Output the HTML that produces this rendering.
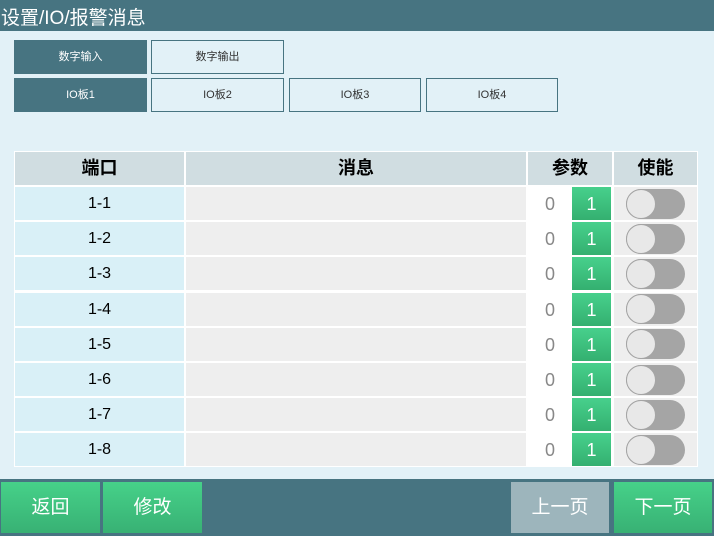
<!DOCTYPE html>
<html><head><meta charset="utf-8"><style>
*{margin:0;padding:0;box-sizing:border-box}
body{width:714px;height:536px;overflow:hidden;background:#e2f1f7;font-family:"Liberation Sans","Noto Sans CJK SC",sans-serif;position:relative}
.hd{position:absolute;left:0;top:0;width:714px;height:31px;background:#477481;color:#fff;font-size:19px;line-height:38px;padding-left:1px;overflow:hidden}
.t{position:absolute;height:34px;font-size:11px;line-height:32px;text-align:center;border:1px solid #477481;color:#333;background:#e2f1f7}
.t.on{background:#477481;color:#fff}
.tb{position:absolute;left:14px;top:151px;width:684px;height:316px;background:#fff}
.c{position:absolute;text-align:center}
.h{background:#d0dde1;font-weight:bold;font-size:18px;line-height:33px;color:#000}
.p{background:#d9f0f7;font-size:16px;line-height:34px;color:#000}
.m{background:#eeeeee}
.z{background:#fff;color:#888;font-size:18px;line-height:34px}
.g{background:linear-gradient(#47d08c,#34b070);color:#fff;font-size:18px;line-height:34px}
.tg{position:absolute;width:59px;height:30px;border-radius:15px;background:#a5a5a5}
.tg:after{content:"";position:absolute;left:0;top:0;width:30px;height:30px;border-radius:50%;background:#e8e8e8;border:1px solid #a5a5a5;box-sizing:border-box}
.ft{position:absolute;left:0;top:479px;width:714px;height:57px;background:#477481}
.b{position:absolute;top:482px;height:51px;font-size:19px;line-height:51px;color:#fff;text-align:center;background:linear-gradient(#46d189,#38b174)}
</style></head><body>
<div class="hd">设置/IO/报警消息</div>
<div class="t on" style="left:14px;top:40px;width:133px">数字输入</div>
<div class="t" style="left:151px;top:40px;width:133px">数字输出</div>
<div class="t on" style="left:14px;top:78px;width:133px">IO板1</div>
<div class="t" style="left:151px;top:78px;width:133px">IO板2</div>
<div class="t" style="left:289px;top:78px;width:132px">IO板3</div>
<div class="t" style="left:426px;top:78px;width:132px">IO板4</div>
<div class="tb"></div>
<div class="c h" style="left:15px;top:152px;width:169px;height:33px">端口</div>
<div class="c h" style="left:186px;top:152px;width:340px;height:33px">消息</div>
<div class="c h" style="left:528px;top:152px;width:84px;height:33px">参数</div>
<div class="c h" style="left:614px;top:152px;width:83px;height:33px">使能</div>
<div id="rows"></div>
<script>
var s='';for(var i=0;i<8;i++){var y=187+i*35.2;
s+='<div class="c p" style="left:15px;top:'+y+'px;width:169px;height:33px">1-'+(i+1)+'</div>'+
'<div class="c m" style="left:186px;top:'+y+'px;width:340px;height:33px"></div>'+
'<div class="c z" style="left:528px;top:'+y+'px;width:44px;height:33px">0</div>'+
'<div class="c g" style="left:572px;top:'+y+'px;width:39px;height:33px">1</div>'+
'<div class="c m" style="left:614px;top:'+y+'px;width:83px;height:33px"></div>'+
'<div class="tg" style="left:626px;top:'+(y+1.5)+'px"></div>';}
document.getElementById('rows').innerHTML=s;
</script>
<div class="ft"></div>
<div class="b" style="left:1px;width:99px">返回</div>
<div class="b" style="left:103px;width:99px">修改</div>
<div class="b" style="left:511px;width:98px;background:#9db5bc">上一页</div>
<div class="b" style="left:614px;width:98px">下一页</div>
</body></html>
